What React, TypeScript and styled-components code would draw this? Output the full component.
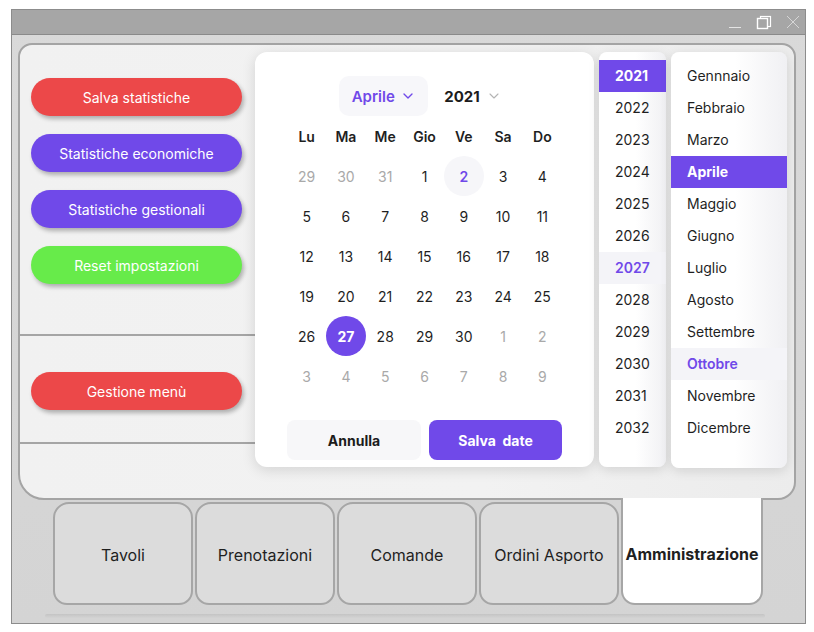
import React from "react";
import styled, { createGlobalStyle, css } from "styled-components";
import { ChevronDown } from "lucide-react";

const PURPLE = "#7049e9";

const Global = createGlobalStyle`
  html, body { margin: 0; padding: 0; background: #ffffff; }
  body { font-family: Inter, "Noto Sans", "Liberation Sans", sans-serif; }
  * { box-sizing: border-box; }
`;

const Window = styled.div`
  margin: 9px 0 0 11px;
  width: 795px;
  height: 615px;
  border: 1px solid #8c8c8c;
  background: linear-gradient(180deg, #d9d9d9 0%, #d4d4d4 100%);
  display: flex;
  flex-direction: column;
`;

const TitleBar = styled.div`
  height: 25px;
  flex: none;
  background: #a6a6a6;
  border-bottom: 1px solid #8a8a8a;
  display: flex;
  align-items: center;
  justify-content: flex-end;
  padding-right: 5px;
  gap: 14px;
`;

const TitleIcon = styled.svg`
  display: block;
`;

const Body = styled.div`
  flex: 1;
  display: flex;
  flex-direction: column;
  padding: 8px 9px 0 6px;
`;

const Panel = styled.div`
  position: relative;
  height: 457px;
  flex: none;
  border: 2px solid #a4a4a4;
  border-radius: 14px 14px 18px 26px;
  background: linear-gradient(90deg, #f1f1f1 0%, #f2f2f2 60%, #ececec 100%);
  display: flex;
  flex-direction: column;
  z-index: 1;
`;

const Section = styled.div<{ $h?: number; $pt: number }>`
  ${(p) => (p.$h ? css`height: ${p.$h}px;` : css`flex: 1;`)}
  padding: ${(p) => p.$pt}px 0 0 11px;
  display: flex;
  flex-direction: column;
  gap: 18px;
`;

const Rule = styled.div`
  height: 2px;
  width: 300px;
  background: #a5a5a5;
  flex: none;
`;

const PillButton = styled.button<{ $color: string }>`
  width: 211px;
  height: 38px;
  border: none;
  border-radius: 19px;
  background: ${(p) => p.$color};
  color: #ffffff;
  font-family: Inter, "Noto Sans", sans-serif;
  font-size: 14px;
  box-shadow: 2px 3px 4px rgba(0, 0, 0, 0.28);
  padding: 0;
`;

const Popup = styled.div`
  position: absolute;
  top: 7px;
  left: 235px;
  display: flex;
  gap: 5px;
  align-items: flex-start;
`;

const Calendar = styled.div`
  width: 339px;
  height: 415px;
  background: #ffffff;
  border-radius: 12px;
  box-shadow: 0 3px 14px rgba(0, 0, 0, 0.13);
  padding: 24px 32px 0;
  display: flex;
  flex-direction: column;
`;

const Header = styled.div`
  height: 40px;
  display: flex;
  align-items: center;
  justify-content: center;
  gap: 16px;
  padding-right: 8px;
`;

const MonthPick = styled.div`
  width: 89px;
  height: 40px;
  border-radius: 10px;
  background: #f7f7fa;
  color: ${PURPLE};
  font-size: 15px;
  font-weight: 600;
  display: flex;
  align-items: center;
  justify-content: center;
  gap: 5px;
`;

const YearPick = styled.div`
  display: flex;
  align-items: center;
  gap: 6px;
  font-size: 15px;
  font-weight: 700;
  color: #1c1c1c;
`;

const Grid = styled.div`
  display: grid;
  grid-template-columns: repeat(7, minmax(0, 1fr));
  grid-auto-rows: 40px;
`;

const WeekDay = styled.div`
  display: flex;
  align-items: center;
  justify-content: center;
  font-size: 14px;
  font-weight: 600;
  color: #1f1f1f;
`;

const Day = styled.div<{ $muted?: boolean; $kind?: "today" | "selected" }>`
  display: flex;
  align-items: center;
  justify-content: center;
  font-size: 14px;
  color: ${(p) => (p.$muted ? "#a9a9a9" : "#1f1f1f")};
  span {
    width: 40px;
    height: 40px;
    border-radius: 50%;
    display: flex;
    align-items: center;
    justify-content: center;
    flex: none;
  }
  ${(p) =>
    p.$kind === "today" &&
    css`
      span { background: #f6f6f9; color: ${PURPLE}; font-weight: 600; }
    `}
  ${(p) =>
    p.$kind === "selected" &&
    css`
      span { background: ${PURPLE}; color: #ffffff; font-weight: 700; }
    `}
`;

const Actions = styled.div`
  margin-top: 24px;
  display: grid;
  grid-template-columns: 134px 133px;
  gap: 8px;
`;

const ActionButton = styled.button<{ $primary?: boolean }>`
  height: 40px;
  border: none;
  border-radius: 8px;
  font-family: Inter, "Noto Sans", sans-serif;
  font-size: 14px;
  font-weight: 700;
  white-space: pre;
  background: ${(p) => (p.$primary ? PURPLE : "#f7f7f9")};
  color: ${(p) => (p.$primary ? "#ffffff" : "#1c1c1c")};
`;

const ListPanel = styled.div<{ $w: number; $h: number }>`
  width: ${(p) => p.$w}px;
  height: ${(p) => p.$h}px;
  border-radius: 8px;
  background: linear-gradient(90deg, #ffffff 0%, #ffffff 55%, #f0f0f3 100%);
  box-shadow: 0 3px 12px rgba(0, 0, 0, 0.12);
  padding-top: 8px;
  overflow: hidden;
`;

const ListItem = styled.div<{ $state?: "selected" | "hover" }>`
  height: 32px;
  line-height: 32px;
  padding-left: 16px;
  font-size: 14px;
  color: #1f1f1f;
  ${(p) =>
    p.$state === "selected" &&
    css`
      background: ${PURPLE};
      color: #ffffff;
      font-weight: 700;
    `}
  ${(p) =>
    p.$state === "hover" &&
    css`
      background: #f4f4f8;
      color: ${PURPLE};
      font-weight: 600;
    `}
`;

const TabBar = styled.div`
  display: flex;
  align-items: flex-end;
  gap: 2px;
  padding-left: 35px;
  height: 105px;
  flex: none;
`;

const Tab = styled.div<{ $active?: boolean }>`
  width: 140px;
  height: 103px;
  border: 2px solid #a6a6a6;
  border-radius: 16px 16px 14px 14px;
  background: #dcdcdc;
  display: flex;
  align-items: center;
  justify-content: center;
  font-size: 16px;
  color: #1f1f1f;
  padding-top: 2px;
  ${(p) =>
    p.$active &&
    css`
      width: 142px;
      height: 107px;
      background: #ffffff;
      font-weight: 700;
      border-top: none;
      border-radius: 0 0 14px 14px;
      position: relative;
      z-index: 2;
      padding-top: 6px;
    `}
`;

const TabShadow = styled.div`
  margin: 9px 0 0 27px;
  width: 720px;
  height: 4px;
  border-radius: 2px;
  background: linear-gradient(180deg, #c4c4c4, #d3d3d3);
`;

const years = Array.from({ length: 12 }, (_, i) => 2021 + i);
const months = [
  "Gennnaio", "Febbraio", "Marzo", "Aprile", "Maggio", "Giugno",
  "Luglio", "Agosto", "Settembre", "Ottobre", "Novembre", "Dicembre",
];
const weekdays = ["Lu", "Ma", "Me", "Gio", "Ve", "Sa", "Do"];

type Cell = { n: number; muted?: boolean; kind?: "today" | "selected" };
const days: Cell[] = [
  { n: 29, muted: true }, { n: 30, muted: true }, { n: 31, muted: true },
  ...Array.from({ length: 30 }, (_, i) => ({
    n: i + 1,
    kind: i + 1 === 2 ? ("today" as const) : i + 1 === 27 ? ("selected" as const) : undefined,
  })),
  ...Array.from({ length: 9 }, (_, i) => ({ n: i + 1, muted: true })),
];

export default function App() {
  return (
    <>
      <Global />
      <Window>
        <TitleBar>
          <TitleIcon width="14" height="14" viewBox="0 0 14 14">
            <line x1="1" y1="12.5" x2="13" y2="12.5" stroke="#e4e4e4" strokeWidth="1" />
          </TitleIcon>
          <TitleIcon width="16" height="15" viewBox="0 0 16 15">
            <rect x="4.5" y="1.5" width="10" height="10" fill="none" stroke="#ffffff" strokeWidth="1.2" />
            <rect x="1.5" y="3.5" width="10" height="10" fill="#a6a6a6" stroke="#ffffff" strokeWidth="1.4" />
          </TitleIcon>
          <TitleIcon width="14" height="14" viewBox="0 0 14 14">
            <path d="M1 1 L13 13 M13 1 L1 13" stroke="#d6d6d6" strokeWidth="1" fill="none" />
          </TitleIcon>
        </TitleBar>
        <Body>
          <Panel>
            <Section $h={289} $pt={33}>
              <PillButton $color="#ec4849">Salva statistiche</PillButton>
              <PillButton $color={PURPLE}>Statistiche economiche</PillButton>
              <PillButton $color={PURPLE}>Statistiche gestionali</PillButton>
              <PillButton $color="#67eb4a">Reset impostazioni</PillButton>
            </Section>
            <Rule />
            <Section $h={106} $pt={36}>
              <PillButton $color="#ec4849">Gestione menù</PillButton>
            </Section>
            <Rule />
            <Section $pt={0} />
            <Popup>
              <Calendar>
                <Header>
                  <MonthPick>
                    Aprile <ChevronDown size={16} strokeWidth={2} />
                  </MonthPick>
                  <YearPick>
                    2021 <ChevronDown size={16} strokeWidth={1.6} color="#b4b4b4" />
                  </YearPick>
                </Header>
                <Grid>
                  {weekdays.map((w) => (
                    <WeekDay key={w}>{w}</WeekDay>
                  ))}
                </Grid>
                <Grid>
                  {days.map((d, i) => (
                    <Day key={i} $muted={d.muted} $kind={d.kind}>
                      <span>{d.n}</span>
                    </Day>
                  ))}
                </Grid>
                <Actions>
                  <ActionButton>Annulla</ActionButton>
                  <ActionButton $primary>{"Salva  date"}</ActionButton>
                </Actions>
              </Calendar>
              <ListPanel $w={67} $h={415}>
                {years.map((y) => (
                  <ListItem
                    key={y}
                    $state={y === 2021 ? "selected" : y === 2027 ? "hover" : undefined}
                  >
                    {y}
                  </ListItem>
                ))}
              </ListPanel>
              <ListPanel $w={116} $h={416}>
                {months.map((m) => (
                  <ListItem
                    key={m}
                    $state={m === "Aprile" ? "selected" : m === "Ottobre" ? "hover" : undefined}
                  >
                    {m}
                  </ListItem>
                ))}
              </ListPanel>
            </Popup>
          </Panel>
          <TabBar>
            <Tab>Tavoli</Tab>
            <Tab>Prenotazioni</Tab>
            <Tab>Comande</Tab>
            <Tab>Ordini Asporto</Tab>
            <Tab $active>Amministrazione</Tab>
          </TabBar>
          <TabShadow />
        </Body>
      </Window>
    </>
  );
}
